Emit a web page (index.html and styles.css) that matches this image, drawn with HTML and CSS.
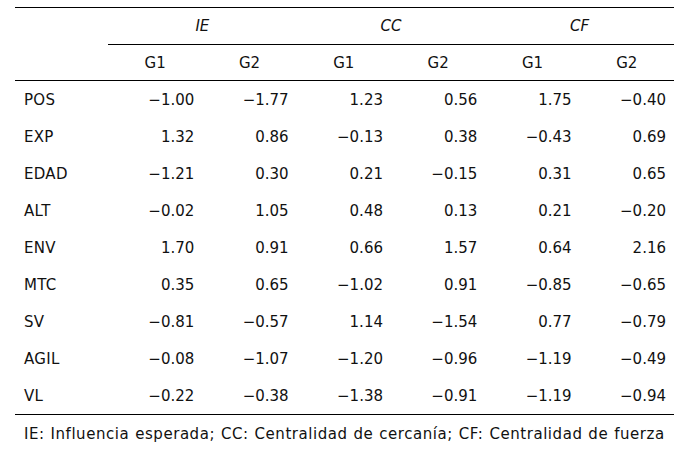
FILE: index.html
```html
<!DOCTYPE html>
<html>
<head>
<meta charset="utf-8">
<link rel="stylesheet" href="styles.css">
</head>
<body>
<div class="wrap">
<table class="tbl">
<colgroup><col class="c-label"><col><col><col><col><col><col></colgroup>
<thead>
<tr class="grp">
<th></th>
<th colspan="2" class="g">IE</th>
<th colspan="2" class="g">CC</th>
<th colspan="2" class="g">CF</th>
</tr>
<tr class="sub">
<th></th>
<th>G1</th><th>G2</th><th>G1</th><th>G2</th><th>G1</th><th>G2</th>
</tr>
</thead>
<tbody>
<tr><td>POS</td><td>−1.00</td><td>−1.77</td><td>1.23</td><td>0.56</td><td>1.75</td><td>−0.40</td></tr>
<tr><td>EXP</td><td>1.32</td><td>0.86</td><td>−0.13</td><td>0.38</td><td>−0.43</td><td>0.69</td></tr>
<tr><td>EDAD</td><td>−1.21</td><td>0.30</td><td>0.21</td><td>−0.15</td><td>0.31</td><td>0.65</td></tr>
<tr><td>ALT</td><td>−0.02</td><td>1.05</td><td>0.48</td><td>0.13</td><td>0.21</td><td>−0.20</td></tr>
<tr><td>ENV</td><td>1.70</td><td>0.91</td><td>0.66</td><td>1.57</td><td>0.64</td><td>2.16</td></tr>
<tr><td>MTC</td><td>0.35</td><td>0.65</td><td>−1.02</td><td>0.91</td><td>−0.85</td><td>−0.65</td></tr>
<tr><td>SV</td><td>−0.81</td><td>−0.57</td><td>1.14</td><td>−1.54</td><td>0.77</td><td>−0.79</td></tr>
<tr><td>AGIL</td><td>−0.08</td><td>−1.07</td><td>−1.20</td><td>−0.96</td><td>−1.19</td><td>−0.49</td></tr>
<tr><td>VL</td><td>−0.22</td><td>−0.38</td><td>−1.38</td><td>−0.91</td><td>−1.19</td><td>−0.94</td></tr>
</tbody>
</table>
<p class="note">IE: Influencia esperada; CC: Centralidad de cercanía; CF: Centralidad de fuerza</p>
</div>
</body>
</html>
```
FILE: styles.css
```css
html, body {
  margin: 0;
  padding: 0;
  background: #fff;
}
body {
  font-family: "DejaVu Sans", Verdana, sans-serif;
  font-size: 15px;
  color: #111;
}
.wrap {
  padding: 7px 20px 0 15px;
}
.tbl {
  width: 659px;
  border-collapse: collapse;
  table-layout: fixed;
  border-top: 1px solid #000;
  border-bottom: 1px solid #000;
}
.c-label {
  width: 93px;
}
.tbl th, .tbl td {
  padding: 0;
  font-weight: normal;
  white-space: nowrap;
}
.grp th {
  height: 36px;
  text-align: center;
  font-style: italic;
}
.grp th.g {
  border-bottom: 1px solid #000;
}
.sub th {
  height: 35px;
  text-align: center;
  border-bottom: 1px solid #000;
}
.tbl tbody td {
  height: 37px;
  text-align: right;
  padding-right: 8px;
}
.tbl tbody td:first-child {
  text-align: left;
  padding-left: 9px;
  padding-right: 0;
  letter-spacing: 0.3px;
}
.note {
  margin: 0;
  padding: 10px 0 0 9px;
  line-height: 18px;
  letter-spacing: 0.55px;
  word-spacing: 0.6px;
}
```
